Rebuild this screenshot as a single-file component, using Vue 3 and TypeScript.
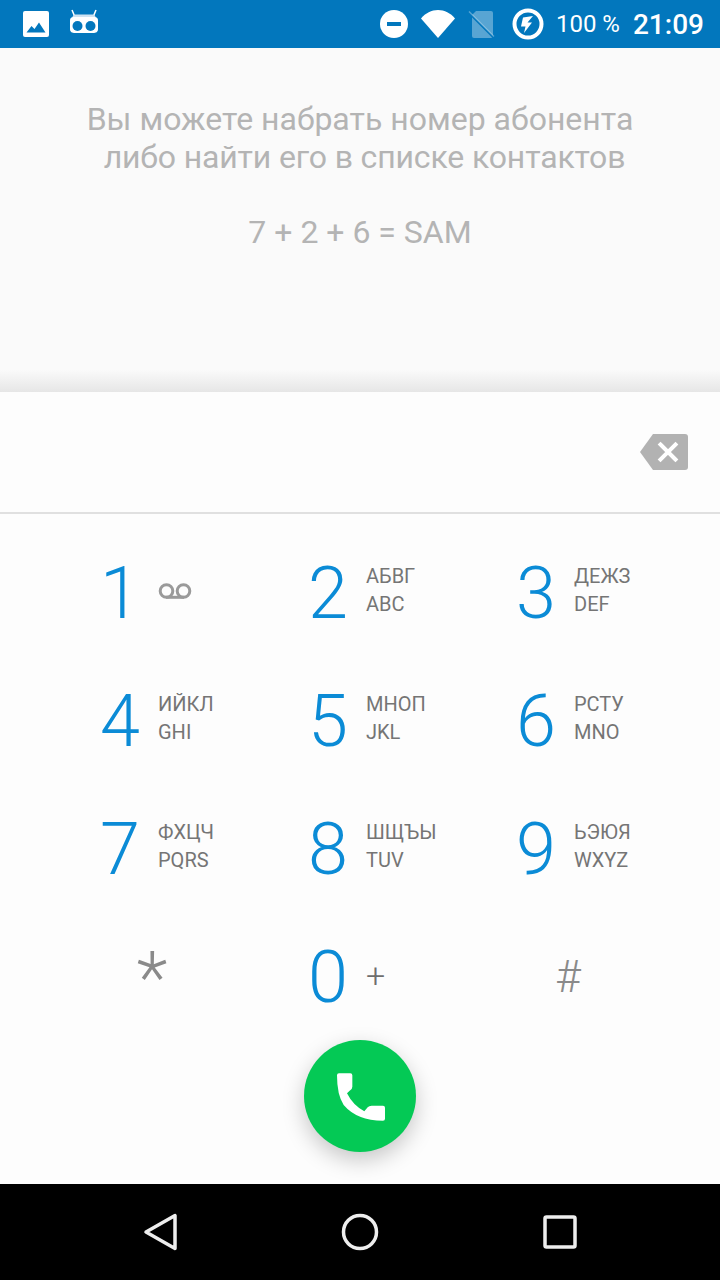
<script setup lang="ts">
const keys = [
  { n: '1', a: '', b: '', vm: true },
  { n: '2', a: 'АБВГ', b: 'ABC' },
  { n: '3', a: 'ДЕЖЗ', b: 'DEF' },
  { n: '4', a: 'ИЙКЛ', b: 'GHI' },
  { n: '5', a: 'МНОП', b: 'JKL' },
  { n: '6', a: 'РСТУ', b: 'MNO' },
  { n: '7', a: 'ФХЦЧ', b: 'PQRS' },
  { n: '8', a: 'ШЩЪЫ', b: 'TUV' },
  { n: '9', a: 'ЬЭЮЯ', b: 'WXYZ' },
]
</script>

<template>
  <div class="screen">
    <header class="status">
      <div class="st-left">
        <svg class="i-img" width="26" height="26" viewBox="0 0 26 26"><rect width="26" height="26" rx="2" fill="#fff"/><path fill="#0277bd" d="M3.500 21.500l5-6.500 3 3 4.500-6.500 6.500 10z"/></svg>
        <svg class="i-bot" width="30" height="26" viewBox="0 0 30 26"><path stroke="#fff" stroke-width="1.500" d="M3 1l2.500 6M27 1l-2.500 6"/><path fill="#cfe3f2" d="M5 5.500h20l2 3H3z"/><path fill="#fff" d="M1 12c0-3 1-4 4-4h20c3 0 4 1 4 4v8c0 3-2 4-5 4H6c-3 0-5-1-5-4z"/><circle cx="8.500" cy="17" r="5" fill="#0277bd"/><circle cx="21.500" cy="17" r="5" fill="#0277bd"/></svg>
      </div>
      <div class="st-right">
        <svg class="i-dnd" width="28" height="28" viewBox="0 0 28 28"><circle cx="14" cy="14" r="14" fill="#fff"/><rect x="7" y="12" width="14" height="4" fill="#0277bd"/></svg>
        <svg class="i-wifi" width="34" height="28" viewBox="0 0 34 28"><path fill="#fff" d="M0 8.500C4.500 3 10.500 0 17 0s12.500 3 17 8.500L17 28z"/></svg>
        <svg class="i-sim" width="27" height="28" viewBox="0 0 27 28"><path fill="#fff" fill-opacity=".34" d="M8 1h15a2 2 0 0 1 2 2v23a2 2 0 0 1-2 2H6a2 2 0 0 1-2-2V5z"/><path stroke="#0277bd" stroke-width="2" d="M1 3l25 25"/><path stroke="#fff" stroke-opacity=".34" stroke-width="1.500" d="M1 1.500l25 25"/></svg>
        <svg class="i-bolt" width="32" height="32" viewBox="0 0 32 32"><circle cx="16" cy="16" r="13.500" fill="none" stroke="#fff" stroke-width="4"/><path fill="#fff" d="M21 8l-10 1.500-2 9h4.500L12 25l8-10.500h-4.500z"/></svg>
        <span class="pct">100 %</span>
        <span class="clock">21:09</span>
      </div>
    </header>

    <section class="hint">
      <p>Вы можете набрать номер абонента</p>
      <p class="second">либо найти его в списке контактов</p>
      <p class="code">7 + 2 + 6 = SAM</p>
    </section>

    <section class="dial">
      <div class="digits">
        <svg width="48" height="36" viewBox="0 0 48 36"><path fill="#b2b2b2" d="M13 0h32a3 3 0 0 1 3 3v30a3 3 0 0 1-3 3H13L0 18z"/><path stroke="#fff" stroke-width="4" stroke-linecap="square" d="M20.500 10.500l15 15M35.500 10.500l-15 15"/></svg>
      </div>
      <div class="pad">
        <div v-for="k in keys" :key="k.n" class="key">
          <span class="num">{{ k.n }}</span>
          <span v-if="k.vm" class="sub vm">
            <svg width="34" height="16" viewBox="0 0 34 16"><circle cx="8.500" cy="8" r="6.300" fill="none" stroke="#9a9a9a" stroke-width="3"/><circle cx="25.500" cy="8" r="6.300" fill="none" stroke="#9a9a9a" stroke-width="3"/><path stroke="#9a9a9a" stroke-width="3" d="M8 14.300h18"/></svg>
          </span>
          <span v-else class="sub"><span>{{ k.a }}</span><span>{{ k.b }}</span></span>
        </div>
        <div class="key center"><span class="num sym star">*</span></div>
        <div class="key"><span class="num">0</span><span class="plus">+</span></div>
        <div class="key center"><span class="num sym hash">#</span></div>
      </div>
      <div class="fab-row">
        <button class="fab">
          <svg class="phone" width="48" height="48" viewBox="0 0 144 142"><path fill="#fff" d="M6 0H40Q46 0 46 6V40Q46 48 38 52L30 60Q48 96 82 114L92 102Q96 97 104 97H138Q144 97 144 103V136Q144 142 138 142Q60 142 20 95Q0 65 0 6Q0 0 6 0Z"/></svg>
        </button>
      </div>
    </section>

    <nav class="nav">
      <svg width="36" height="40" viewBox="0 0 36 40"><path fill="none" stroke="#eee" stroke-width="3.500" stroke-linejoin="round" d="M33 3.500v33L4 20z"/></svg>
      <svg width="40" height="40" viewBox="0 0 40 40"><circle cx="20" cy="20" r="16.500" fill="none" stroke="#eee" stroke-width="3.500"/></svg>
      <svg width="36" height="36" viewBox="0 0 36 36"><rect x="3" y="3" width="30" height="30" rx="1.500" fill="none" stroke="#eee" stroke-width="3.500"/></svg>
    </nav>
  </div>
</template>

<style>
html, body { margin: 0; background: #000; }
</style>

<style scoped>
.screen { width: 720px; height: 1280px; display: flex; flex-direction: column; font-family: Roboto, "Liberation Sans", sans-serif; background: #fafafa; overflow: hidden; }
.status { height: 48px; flex: none; background: #0277bd; display: flex; align-items: center; justify-content: space-between; padding: 0 16px 0 23px; box-sizing: border-box; color: #fff; }
.st-left, .st-right { display: flex; align-items: center; }
.i-bot { margin-left: 20px; margin-top: -4px; }
.i-wifi { margin-left: 13px; }
.i-sim { margin-left: 13px; }
.i-bolt { margin-left: 17px; }
.pct { font-size: 24px; margin-left: 12px; }
.clock { font-size: 28px; font-weight: 500; margin-left: 13px; }
.hint { height: 344px; flex: none; box-sizing: border-box; padding-top: 52px; text-align: center; color: #b4b4b4; font-size: 32px; line-height: 38px; background: linear-gradient(#fafafa 322px, #e6e6e6); }
.hint p { margin: 0; }
.hint .second { letter-spacing: -.15px; padding-left: 9px; }
.hint .code { margin-top: 37px; }
.dial { flex: 1; background: #fdfdfd; display: flex; flex-direction: column; }
.digits { height: 122px; flex: none; box-sizing: border-box; border-bottom: 2px solid #e0e0e0; display: flex; align-items: center; justify-content: flex-end; padding: 0 32px 0 0; }
.pad { display: grid; grid-template-columns: repeat(3, 208px); grid-auto-rows: 128px; justify-content: center; padding-top: 13px; }
.key { display: flex; align-items: center; gap: 12px; height: 128px; padding-left: 46px; }
.key.center { justify-content: center; padding-left: 0; }
.num { font-size: 72px; font-weight: 300; color: #0b8bd6; width: 52px; text-align: center; flex: none; position: relative; top: 2px; }
.sub { display: flex; flex-direction: column; font-size: 20px; line-height: 28px; color: #757575; white-space: nowrap; margin-top: -3px; }
.vm { display: block; line-height: 0; margin-top: -1px; }
.plus { font-size: 34px; font-weight: 300; color: #6e6e6e; }
.sym { color: #8a8a8a; }
.star { font-size: 72px; top: 3px; }
.hash { font-size: 44px; top: 2px; }
.fab-row { display: flex; justify-content: center; margin-top: 1px; }
.fab { width: 112px; height: 112px; border: 0; border-radius: 50%; background: #04c955; box-shadow: 0 8px 22px rgba(0,0,0,.22); display: flex; align-items: center; justify-content: center; padding: 0; }
.phone { margin: 2px 0 0 2px; }
.nav { height: 96px; flex: none; background: #000; display: grid; grid-template-columns: repeat(3, 200px); justify-content: center; justify-items: center; align-items: center; }
</style>
